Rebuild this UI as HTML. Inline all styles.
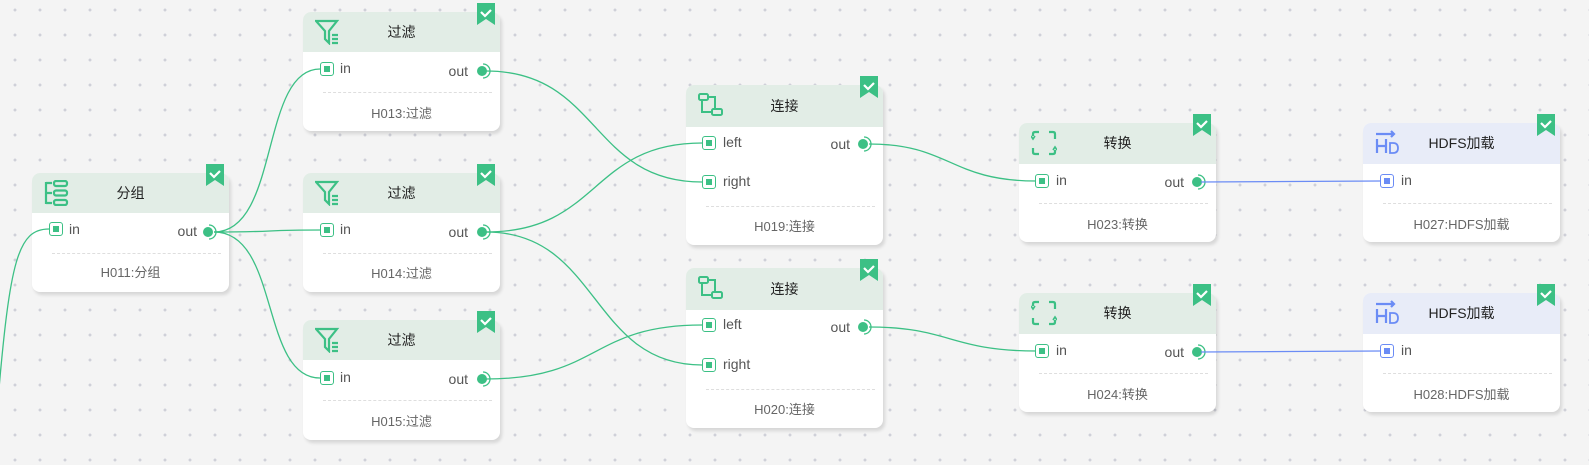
<!DOCTYPE html>
<html><head><meta charset="utf-8"><style>
*{margin:0;padding:0;box-sizing:border-box}
body{width:1589px;height:465px;overflow:hidden;background-color:#f4f4f4;
background-image:radial-gradient(circle,#cfd0d8 1.3px,transparent 1.6px);
background-size:25px 25px;background-position:2.5px -2.5px;
font-family:"Liberation Sans","Noto Sans CJK SC",sans-serif;position:relative}
.n{position:absolute;width:197px;background:#fff;border-radius:8px;box-shadow:2px 3px 3px rgba(0,0,0,.12)}
.h{height:40px;background:#e2ede6;border-radius:8px 8px 0 0;text-align:center;line-height:40px;font-size:14px;color:#222}
.h.b{background:#e8ecf8}
.ic{position:absolute;left:12px;top:7px}
.bm{position:absolute;right:5px;top:-9px}
.p{position:absolute;font-size:14px;color:#555}
.sq{position:absolute;width:14px;height:14px;border:1.5px solid #3cc085;border-radius:3px;background:#fff}
.sq::after{content:"";position:absolute;left:2.5px;top:2.5px;width:6px;height:6px;background:#3cc085}
.sq.b{border-color:#6b8cf5}.sq.b::after{background:#6b8cf5}
.dl{position:absolute;left:20px;right:8px;border-top:1px dashed #dedede}
.ft{position:absolute;left:0;right:0;text-align:center;font-size:13px;color:#666}
svg.w{position:absolute;left:0;top:0;z-index:5}
</style></head><body>
<svg class="w" width="1589" height="465" fill="none" stroke-width="1.3">
<g stroke="#3cc085">
<path d="M-2,400 C10,260 18,229 49,229"/>
<path d="M214,232 C280,232 260,69 320,69"/>
<path d="M214,232 C280,232 260,230 320,230"/>
<path d="M214,232 C280,232 260,378 320,378"/>
<path d="M486,71 C600,71 590,182 702,182"/>
<path d="M486,232 C600,232 590,143 702,143"/>
<path d="M486,232 C600,232 590,365 702,365"/>
<path d="M486,379 C600,379 590,325 702,325"/>
<path d="M869,144 C950,144 950,181 1036,181"/>
<path d="M869,327 C950,327 950,351 1036,351"/>
</g>
<g stroke="#6b8cf5">
<path d="M1201,182 C1290,182 1290,181 1380,181"/>
<path d="M1201,352 C1290,352 1290,351 1380,351"/>
</g>
</svg>

<div class="n" style="left:32px;top:173px;height:119px">
 <div class="h">分组</div>
 <svg class="ic" width="26" height="26" viewBox="0 0 26 26" fill="none" stroke="#3cc085" stroke-width="2.2"><path d="M2 2v22M2 3h6M2 13h6M2 23h6"/><rect x="10" y="1" width="13" height="5" rx="2"/><rect x="10" y="10.5" width="13" height="5" rx="2"/><rect x="10" y="20" width="13" height="5" rx="2"/></svg>
 <svg class="bm" width="18" height="22"><path d="M0 0h18v22l-9-6-9 6z" fill="#3cc085"/><path d="M4 9l4 4 6-6" stroke="#fff" stroke-width="2.2" fill="none"/></svg>
 <div class="sq" style="left:17px;top:49px"></div><div class="p" style="left:37px;top:48px">in</div>
 <div class="p" style="right:32px;top:50px">out</div>
 <svg style="position:absolute;left:168px;top:51px" width="18" height="16"><circle cx="8" cy="8" r="5" fill="#3cc085"/><path d="M9 1a7 7 0 0 1 0 14" stroke="#3cc085" stroke-width="1.3" fill="none"/></svg>
 <div class="dl" style="top:80px"></div><div class="ft" style="top:89px">H011:分组</div>
</div>

<div class="n" style="left:303px;top:12px;height:119px">
 <div class="h">过滤</div>
 <svg class="ic" width="26" height="26" viewBox="0 0 26 26" fill="none" stroke="#3cc085" stroke-width="2.2"><path d="M1 2h21l-8 10v12l-4-4v-8z"/><path d="M17 16h6M17 20h6M17 24h6"/></svg>
 <svg class="bm" width="18" height="22"><path d="M0 0h18v22l-9-6-9 6z" fill="#3cc085"/><path d="M4 9l4 4 6-6" stroke="#fff" stroke-width="2.2" fill="none"/></svg>
 <div class="sq" style="left:17px;top:50px"></div><div class="p" style="left:37px;top:48px">in</div>
 <div class="p" style="right:32px;top:51px">out</div>
 <svg style="position:absolute;left:171px;top:51px" width="18" height="16"><circle cx="8" cy="8" r="5" fill="#3cc085"/><path d="M9 1a7 7 0 0 1 0 14" stroke="#3cc085" stroke-width="1.3" fill="none"/></svg>
 <div class="dl" style="top:80px"></div><div class="ft" style="top:91px">H013:过滤</div>
</div>

<div class="n" style="left:303px;top:173px;height:119px">
 <div class="h">过滤</div>
 <svg class="ic" width="26" height="26" viewBox="0 0 26 26" fill="none" stroke="#3cc085" stroke-width="2.2"><path d="M1 2h21l-8 10v12l-4-4v-8z"/><path d="M17 16h6M17 20h6M17 24h6"/></svg>
 <svg class="bm" width="18" height="22"><path d="M0 0h18v22l-9-6-9 6z" fill="#3cc085"/><path d="M4 9l4 4 6-6" stroke="#fff" stroke-width="2.2" fill="none"/></svg>
 <div class="sq" style="left:17px;top:50px"></div><div class="p" style="left:37px;top:48px">in</div>
 <div class="p" style="right:32px;top:51px">out</div>
 <svg style="position:absolute;left:171px;top:51px" width="18" height="16"><circle cx="8" cy="8" r="5" fill="#3cc085"/><path d="M9 1a7 7 0 0 1 0 14" stroke="#3cc085" stroke-width="1.3" fill="none"/></svg>
 <div class="dl" style="top:80px"></div><div class="ft" style="top:90px">H014:过滤</div>
</div>

<div class="n" style="left:303px;top:320px;height:120px">
 <div class="h">过滤</div>
 <svg class="ic" width="26" height="26" viewBox="0 0 26 26" fill="none" stroke="#3cc085" stroke-width="2.2"><path d="M1 2h21l-8 10v12l-4-4v-8z"/><path d="M17 16h6M17 20h6M17 24h6"/></svg>
 <svg class="bm" width="18" height="22"><path d="M0 0h18v22l-9-6-9 6z" fill="#3cc085"/><path d="M4 9l4 4 6-6" stroke="#fff" stroke-width="2.2" fill="none"/></svg>
 <div class="sq" style="left:17px;top:51px"></div><div class="p" style="left:37px;top:49px">in</div>
 <div class="p" style="right:32px;top:51px">out</div>
 <svg style="position:absolute;left:171px;top:51px" width="18" height="16"><circle cx="8" cy="8" r="5" fill="#3cc085"/><path d="M9 1a7 7 0 0 1 0 14" stroke="#3cc085" stroke-width="1.3" fill="none"/></svg>
 <div class="dl" style="top:80px"></div><div class="ft" style="top:91px">H015:过滤</div>
</div>

<div class="n" style="left:686px;top:85px;height:160px">
 <div class="h" style="height:42px;line-height:42px">连接</div>
 <svg class="ic" width="26" height="26" viewBox="0 0 26 26" fill="none" stroke="#3cc085" stroke-width="2"><rect x="1" y="2" width="9" height="6" rx="1.5"/><rect x="14" y="17" width="10" height="6" rx="1.5"/><path d="M4 8v12h10M10 5h7v12"/></svg>
 <svg class="bm" width="18" height="22"><path d="M0 0h18v22l-9-6-9 6z" fill="#3cc085"/><path d="M4 9l4 4 6-6" stroke="#fff" stroke-width="2.2" fill="none"/></svg>
 <div class="sq" style="left:16px;top:51px"></div><div class="p" style="left:37px;top:49px">left</div>
 <div class="sq" style="left:16px;top:90px"></div><div class="p" style="left:37px;top:88px">right</div>
 <div class="p" style="right:33px;top:51px">out</div>
 <svg style="position:absolute;left:169px;top:51px" width="18" height="16"><circle cx="8" cy="8" r="5" fill="#3cc085"/><path d="M9 1a7 7 0 0 1 0 14" stroke="#3cc085" stroke-width="1.3" fill="none"/></svg>
 <div class="dl" style="top:121px"></div><div class="ft" style="top:131px">H019:连接</div>
</div>

<div class="n" style="left:686px;top:268px;height:160px">
 <div class="h" style="height:42px;line-height:42px">连接</div>
 <svg class="ic" width="26" height="26" viewBox="0 0 26 26" fill="none" stroke="#3cc085" stroke-width="2"><rect x="1" y="2" width="9" height="6" rx="1.5"/><rect x="14" y="17" width="10" height="6" rx="1.5"/><path d="M4 8v12h10M10 5h7v12"/></svg>
 <svg class="bm" width="18" height="22"><path d="M0 0h18v22l-9-6-9 6z" fill="#3cc085"/><path d="M4 9l4 4 6-6" stroke="#fff" stroke-width="2.2" fill="none"/></svg>
 <div class="sq" style="left:16px;top:50px"></div><div class="p" style="left:37px;top:48px">left</div>
 <div class="sq" style="left:16px;top:90px"></div><div class="p" style="left:37px;top:88px">right</div>
 <div class="p" style="right:33px;top:51px">out</div>
 <svg style="position:absolute;left:169px;top:51px" width="18" height="16"><circle cx="8" cy="8" r="5" fill="#3cc085"/><path d="M9 1a7 7 0 0 1 0 14" stroke="#3cc085" stroke-width="1.3" fill="none"/></svg>
 <div class="dl" style="top:121px"></div><div class="ft" style="top:131px">H020:连接</div>
</div>

<div class="n" style="left:1019px;top:123px;height:119px">
 <div class="h" style="height:41px;line-height:41px">转换</div>
 <svg class="ic" width="26" height="26" viewBox="0 0 26 26" fill="none" stroke="#3cc085" stroke-width="2.2"><path d="M8 2H4Q2 2 2 4v2M18 2h4q2 0 2 2v5M24 20v2q0 2-2 2h-4M8 24H4q-2 0-2-2v-4"/><path d="M0 6l2 3 2-3M22 20l2-3 2 3" stroke-width="1.6"/></svg>
 <svg class="bm" width="18" height="22"><path d="M0 0h18v22l-9-6-9 6z" fill="#3cc085"/><path d="M4 9l4 4 6-6" stroke="#fff" stroke-width="2.2" fill="none"/></svg>
 <div class="sq" style="left:16px;top:51px"></div><div class="p" style="left:37px;top:49px">in</div>
 <div class="p" style="right:32px;top:51px">out</div>
 <svg style="position:absolute;left:170px;top:51px" width="18" height="16"><circle cx="8" cy="8" r="5" fill="#3cc085"/><path d="M9 1a7 7 0 0 1 0 14" stroke="#3cc085" stroke-width="1.3" fill="none"/></svg>
 <div class="dl" style="top:80px"></div><div class="ft" style="top:91px">H023:转换</div>
</div>

<div class="n" style="left:1019px;top:293px;height:119px">
 <div class="h" style="height:41px;line-height:41px">转换</div>
 <svg class="ic" width="26" height="26" viewBox="0 0 26 26" fill="none" stroke="#3cc085" stroke-width="2.2"><path d="M8 2H4Q2 2 2 4v2M18 2h4q2 0 2 2v5M24 20v2q0 2-2 2h-4M8 24H4q-2 0-2-2v-4"/><path d="M0 6l2 3 2-3M22 20l2-3 2 3" stroke-width="1.6"/></svg>
 <svg class="bm" width="18" height="22"><path d="M0 0h18v22l-9-6-9 6z" fill="#3cc085"/><path d="M4 9l4 4 6-6" stroke="#fff" stroke-width="2.2" fill="none"/></svg>
 <div class="sq" style="left:16px;top:51px"></div><div class="p" style="left:37px;top:49px">in</div>
 <div class="p" style="right:32px;top:51px">out</div>
 <svg style="position:absolute;left:170px;top:51px" width="18" height="16"><circle cx="8" cy="8" r="5" fill="#3cc085"/><path d="M9 1a7 7 0 0 1 0 14" stroke="#3cc085" stroke-width="1.3" fill="none"/></svg>
 <div class="dl" style="top:80px"></div><div class="ft" style="top:91px">H024:转换</div>
</div>

<div class="n" style="left:1363px;top:123px;height:119px">
 <div class="h b" style="height:41px;line-height:41px">HDFS加载</div>
 <svg class="ic" width="26" height="26" viewBox="0 0 26 26" fill="none" stroke="#6b8cf5" stroke-width="2.2"><path d="M1 4h18M16 1l3 3-3 3"/><path d="M2 9v14M11 9v14M2 16h9"/><path d="M15 13v10h3q5 0 5-5t-5-5z" stroke-width="1.8"/></svg>
 <svg class="bm" width="18" height="22"><path d="M0 0h18v22l-9-6-9 6z" fill="#3cc085"/><path d="M4 9l4 4 6-6" stroke="#fff" stroke-width="2.2" fill="none"/></svg>
 <div class="sq b" style="left:17px;top:51px"></div><div class="p" style="left:38px;top:49px">in</div>
 <div class="dl" style="top:80px"></div><div class="ft" style="top:91px">H027:HDFS加载</div>
</div>

<div class="n" style="left:1363px;top:293px;height:119px">
 <div class="h b" style="height:41px;line-height:41px">HDFS加载</div>
 <svg class="ic" width="26" height="26" viewBox="0 0 26 26" fill="none" stroke="#6b8cf5" stroke-width="2.2"><path d="M1 4h18M16 1l3 3-3 3"/><path d="M2 9v14M11 9v14M2 16h9"/><path d="M15 13v10h3q5 0 5-5t-5-5z" stroke-width="1.8"/></svg>
 <svg class="bm" width="18" height="22"><path d="M0 0h18v22l-9-6-9 6z" fill="#3cc085"/><path d="M4 9l4 4 6-6" stroke="#fff" stroke-width="2.2" fill="none"/></svg>
 <div class="sq b" style="left:17px;top:51px"></div><div class="p" style="left:38px;top:49px">in</div>
 <div class="dl" style="top:80px"></div><div class="ft" style="top:91px">H028:HDFS加载</div>
</div>
</body></html>
